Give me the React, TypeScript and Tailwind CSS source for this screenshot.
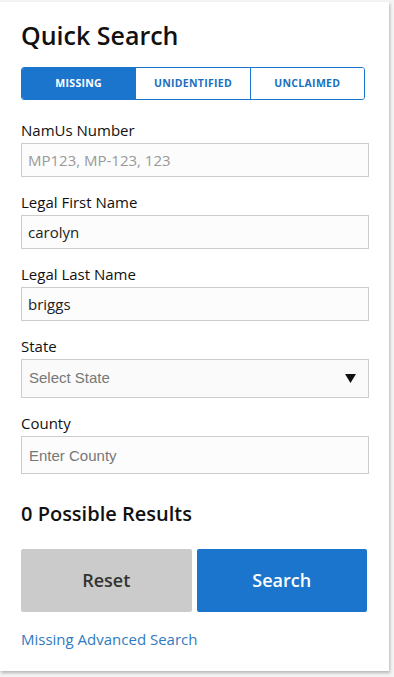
import { useState } from 'react'

const TABS = ['Missing', 'Unidentified', 'Unclaimed']

const sans = { fontFamily: '"Open Sans", "Noto Sans", sans-serif' }

function Field({ label, children }: { label: string; children: React.ReactNode }) {
  return (
    <div className="flex flex-col">
      <label className="text-[15px] leading-[20px] text-[#111] mb-[3px]">{label}</label>
      {children}
    </div>
  )
}

export default function App() {
  const [tab, setTab] = useState('Missing')
  const [first, setFirst] = useState('carolyn')
  const [last, setLast] = useState('briggs')

  return (
    <div className="min-h-[677px] bg-[#f4f4f4] pt-[2px]" style={sans}>
      <div className="w-[389px] h-[669px] bg-white shadow-[1px_2px_3px_rgba(0,0,0,0.25)] pl-[21px] pr-[20px] pt-[18px]">
        <h1 className="text-[25px] leading-[30px] font-semibold text-[#111]">Quick Search</h1>

        <div className="mt-[17px] w-[344px] h-[33px] flex border border-[#1b75cc] rounded-[3px] overflow-hidden">
          {TABS.map((t, i) => (
            <button
              key={t}
              onClick={() => setTab(t)}
              className={
                'flex-1 text-[10.5px] font-bold uppercase tracking-[0.3px] ' +
                (i > 0 ? 'border-l border-[#1b75cc] ' : '') +
                (tab === t ? 'bg-[#1b75cc] text-white' : 'bg-white text-[#1b6fbf]')
              }
            >
              {t}
            </button>
          ))}
        </div>

        <div className="mt-[20px] flex flex-col gap-[15px]">
          <Field label="NamUs Number">
            <input
              placeholder="MP123, MP-123, 123"
              className="w-[348px] h-[34px] border border-[#ccc] bg-[#fcfcfc] px-[6px] text-[15px] text-[#222] placeholder:text-[#999] outline-none"
            />
          </Field>
          <Field label="Legal First Name">
            <input
              value={first}
              onChange={(e) => setFirst(e.target.value)}
              className="w-[348px] h-[34px] border border-[#ccc] bg-[#fcfcfc] px-[6px] text-[15px] text-[#222] outline-none"
            />
          </Field>
          <Field label="Legal Last Name">
            <input
              value={last}
              onChange={(e) => setLast(e.target.value)}
              className="w-[348px] h-[34px] border border-[#ccc] bg-[#fcfcfc] px-[6px] text-[15px] text-[#222] outline-none"
            />
          </Field>
          <Field label="State">
            <div className="w-[348px] h-[39px] border border-[#ccc] bg-[#fafafa] flex items-center justify-between pl-[7px] pr-[12px]">
              <span className="text-[15px] text-[#777]" style={{ fontFamily: '"Liberation Sans", Arial, sans-serif' }}>
                Select State
              </span>
              <svg width="11" height="9" viewBox="0 0 11 9">
                <path d="M0 0 H11 L5.5 9 Z" fill="#111" />
              </svg>
            </div>
          </Field>
          <Field label="County">
            <input
              placeholder="Enter County"
              className="w-[348px] h-[38px] border border-[#ccc] bg-[#fcfcfc] px-[7px] text-[15px] text-[#222] placeholder:text-[#777] outline-none"
              style={{ fontFamily: '"Liberation Sans", Arial, sans-serif' }}
            />
          </Field>
        </div>

        <div className="mt-[28px] text-[20px] leading-[24px] font-semibold text-[#111]">0 Possible Results</div>

        <div className="mt-[23px] flex gap-[5px] w-[346px]">
          <button className="flex-1 h-[63px] rounded-[2px] bg-[#cbcbcb] text-[#333] text-[18px] font-semibold">
            Reset
          </button>
          <button className="flex-1 h-[63px] rounded-[2px] bg-[#1b75cc] text-white text-[18px] font-semibold">
            Search
          </button>
        </div>

        <a href="#" className="block mt-[16px] text-[15px] text-[#2f7bbf]">
          Missing Advanced Search
        </a>
      </div>
    </div>
  )
}
